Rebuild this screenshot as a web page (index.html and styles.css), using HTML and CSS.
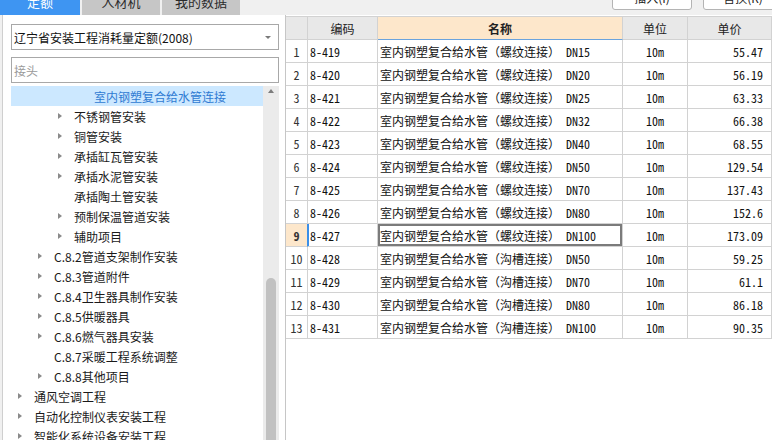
FILE: index.html
```html
<!DOCTYPE html>
<html lang="zh-CN">
<head>
<meta charset="utf-8">
<title>定额</title>
<link rel="stylesheet" href="styles.css">
</head>
<body>
<div class="app">
  <div class="topbar">
    <div class="tab active">定额</div>
    <div class="tab">人材机</div>
    <div class="tab">我的数据</div>
    <div class="spacer"></div>
    <div class="btn">插入(I)</div>
    <div class="btn last">替换(R)</div>
  </div>
  <div class="main">
    <div class="left">
      <div class="select">
        <span class="select-text">辽宁省安装工程消耗量定额(2008)</span>
        <span class="select-caret"></span>
      </div>
      <div class="search"><span class="placeholder">接头</span></div>
      <div class="tree">
        <div class="tree-rows">
          <div class="row lvl4 selected"><span class="tw"></span><span class="label">室内钢塑复合给水管连接</span></div>
          <div class="row lvl3"><span class="tw arrow"></span><span class="label">不锈钢管安装</span></div>
          <div class="row lvl3"><span class="tw arrow"></span><span class="label">铜管安装</span></div>
          <div class="row lvl3"><span class="tw arrow"></span><span class="label">承插缸瓦管安装</span></div>
          <div class="row lvl3"><span class="tw arrow"></span><span class="label">承插水泥管安装</span></div>
          <div class="row lvl3"><span class="tw"></span><span class="label">承插陶土管安装</span></div>
          <div class="row lvl3"><span class="tw arrow"></span><span class="label">预制保温管道安装</span></div>
          <div class="row lvl3"><span class="tw arrow"></span><span class="label">辅助项目</span></div>
          <div class="row lvl2"><span class="tw arrow"></span><span class="label">C.8.2管道支架制作安装</span></div>
          <div class="row lvl2"><span class="tw arrow"></span><span class="label">C.8.3管道附件</span></div>
          <div class="row lvl2"><span class="tw arrow"></span><span class="label">C.8.4卫生器具制作安装</span></div>
          <div class="row lvl2"><span class="tw arrow"></span><span class="label">C.8.5供暖器具</span></div>
          <div class="row lvl2"><span class="tw arrow"></span><span class="label">C.8.6燃气器具安装</span></div>
          <div class="row lvl2"><span class="tw"></span><span class="label">C.8.7采暖工程系统调整</span></div>
          <div class="row lvl2"><span class="tw arrow"></span><span class="label">C.8.8其他项目</span></div>
          <div class="row lvl1"><span class="tw arrow"></span><span class="label">通风空调工程</span></div>
          <div class="row lvl1"><span class="tw arrow"></span><span class="label">自动化控制仪表安装工程</span></div>
          <div class="row lvl1"><span class="tw arrow"></span><span class="label">智能化系统设备安装工程</span></div>
        </div>
        <div class="vscroll">
          <div class="vs-up"></div>
          <div class="vs-thumb"></div>
        </div>
      </div>
    </div>
    <div class="right">
      <table class="grid">
        <thead>
          <tr>
            <th class="c-no"></th>
            <th class="c-code">编码</th>
            <th class="c-name">名称</th>
            <th class="c-unit">单位</th>
            <th class="c-price">单价</th>
          </tr>
        </thead>
        <tbody>
          <tr><td class="no">1</td><td class="code">8-419</td><td class="name">室内钢塑复合给水管（螺纹连接） DN15</td><td class="unit">10m</td><td class="price">55.47</td></tr>
          <tr><td class="no">2</td><td class="code">8-420</td><td class="name">室内钢塑复合给水管（螺纹连接） DN20</td><td class="unit">10m</td><td class="price">56.19</td></tr>
          <tr><td class="no">3</td><td class="code">8-421</td><td class="name">室内钢塑复合给水管（螺纹连接） DN25</td><td class="unit">10m</td><td class="price">63.33</td></tr>
          <tr><td class="no">4</td><td class="code">8-422</td><td class="name">室内钢塑复合给水管（螺纹连接） DN32</td><td class="unit">10m</td><td class="price">66.38</td></tr>
          <tr><td class="no">5</td><td class="code">8-423</td><td class="name">室内钢塑复合给水管（螺纹连接） DN40</td><td class="unit">10m</td><td class="price">68.55</td></tr>
          <tr><td class="no">6</td><td class="code">8-424</td><td class="name">室内钢塑复合给水管（螺纹连接） DN50</td><td class="unit">10m</td><td class="price">129.54</td></tr>
          <tr><td class="no">7</td><td class="code">8-425</td><td class="name">室内钢塑复合给水管（螺纹连接） DN70</td><td class="unit">10m</td><td class="price">137.43</td></tr>
          <tr><td class="no">8</td><td class="code">8-426</td><td class="name">室内钢塑复合给水管（螺纹连接） DN80</td><td class="unit">10m</td><td class="price">152.6</td></tr>
          <tr class="current"><td class="no">9</td><td class="code">8-427</td><td class="name">室内钢塑复合给水管（螺纹连接） DN100</td><td class="unit">10m</td><td class="price">173.09</td></tr>
          <tr><td class="no">10</td><td class="code">8-428</td><td class="name">室内钢塑复合给水管（沟槽连接） DN50</td><td class="unit">10m</td><td class="price">59.25</td></tr>
          <tr><td class="no">11</td><td class="code">8-429</td><td class="name">室内钢塑复合给水管（沟槽连接） DN70</td><td class="unit">10m</td><td class="price">61.1</td></tr>
          <tr><td class="no">12</td><td class="code">8-430</td><td class="name">室内钢塑复合给水管（沟槽连接） DN80</td><td class="unit">10m</td><td class="price">86.18</td></tr>
          <tr><td class="no">13</td><td class="code">8-431</td><td class="name">室内钢塑复合给水管（沟槽连接） DN100</td><td class="unit">10m</td><td class="price">90.35</td></tr>
        </tbody>
      </table>
    </div>
  </div>
</div>
</body>
</html>
```
FILE: styles.css
```css
* { box-sizing: border-box; }
html, body { margin: 0; padding: 0; }
body {
  width: 772px;
  height: 440px;
  overflow: hidden;
  background: #f0f0f0;
  font-family: "Noto Sans CJK SC", "Noto Sans", sans-serif;
  font-size: 12px;
  color: #1e1e1e;
}
.app { display: flex; flex-direction: column; height: 440px; }

/* top bar */
.topbar { height: 15px; display: flex; overflow: hidden; flex: none; }
.tab {
  width: 78px; height: 27px; margin-top: -12px; margin-right: 2px;
  line-height: 27px; text-align: center;
  background: #c6c6c6; color: #2b2b2b; font-size: 13px;
}
.tab.active { width: 80px; background: #3e95f2; color: #fff; }
.spacer { flex: 1; }
.btn {
  width: 80px; height: 25px; margin-top: -15px; margin-left: 11px;
  border: 1px solid #b4b4b4; border-radius: 3px; background: #fff;
  line-height: 23px; text-align: center; font-size: 12px; color: #222;
}
.btn.last { margin-right: -11px; }

/* main */
.main { flex: 1; display: flex; min-height: 0; }
.left {
  margin-left: 2px; width: 283px; flex: none;
  background: #fff; border-left: 1px solid #cfcfcf;
  padding: 9px 6px 0 8px;
  display: flex; flex-direction: column;
}
.select {
  height: 26px; border: 1px solid #a8a8a8; background: #fff;
  display: flex; align-items: center; padding: 0 7px 0 2px;
}
.select-text { flex: 1; font-size: 12px; color: #111; }
.select-caret {
  width: 0; height: 0;
  border-left: 3px solid transparent; border-right: 3px solid transparent;
  border-top: 3px solid #7a7a7a;
}
.search {
  margin-top: 7px; height: 26px; border: 1px solid #a8a8a8; background: #fff;
  display: flex; align-items: center; padding-left: 2px;
}
.placeholder { color: #9a9a9a; font-size: 12px; }

.tree { margin-top: 3px; flex: 1; display: flex; min-height: 0; overflow: hidden; }
.tree-rows { flex: 1; }
.row { height: 20px; display: flex; align-items: center; white-space: nowrap; color: #1a1a1a; }
.row.lvl1 { padding-left: 7px; }
.row.lvl2 { padding-left: 27px; }
.row.lvl3 { padding-left: 47px; }
.row.lvl4 { padding-left: 67px; }
.row.selected { background: #cce8ff; color: #2f7bd3; }
.tw { width: 16px; flex: none; height: 20px; display: flex; align-items: center; }
.tw.arrow::before {
  content: ""; width: 0; height: 0;
  border-top: 3.5px solid transparent; border-bottom: 3.5px solid transparent;
  border-left: 4px solid #8a8a8a;
}
.vscroll {
  width: 16px; flex: none; background: #ebebeb;
  display: flex; flex-direction: column; align-items: center;
}
.vs-up {
  margin-top: 3px; width: 0; height: 0;
  border-left: 3.5px solid transparent; border-right: 3.5px solid transparent;
  border-bottom: 4px solid #7c7c7c;
}
.vs-thumb {
  margin-top: auto; width: 10px; height: 166px; margin-bottom: -4px;
  border-radius: 5px; background: #c1c1c1;
}

/* right grid */
.right {
  flex: 1; background: #fff; border-left: 1px solid #c6c6c6;
  padding-top: 1px; overflow: hidden;
}
.grid {
  border-collapse: separate; border-spacing: 0; table-layout: fixed;
  width: 486px;
}
.grid th, .grid td {
  border-right: 1px solid #d2d2d2; border-bottom: 1px solid #d2d2d2;
  padding: 0; white-space: nowrap; overflow: hidden;
}
.grid th {
  height: 24px; border-top: 1px solid #d2d2d2;
  background: #e8e8e8; font-weight: normal; font-size: 12px; color: #222;
  text-align: center;
}
.grid th.c-name { background: #fde7cb; font-weight: bold; border-bottom-color: #6aa3dd; }
.c-no { width: 22px; }
.c-code { width: 70px; }
.c-name { width: 245px; }
.c-unit { width: 65px; }
.c-price { width: 84px; }
.grid td {
  height: 23px; font-family: "Noto Sans Mono CJK SC", "Liberation Mono", monospace;
  font-size: 12px; color: #111;
}
.grid td.no { text-align: center; color: #333; background: #fff; }
.grid td.code { padding-left: 2px; }
.grid td.name { padding-left: 2px; }
.grid td.unit { text-align: center; }
.grid td.price { text-align: right; padding-right: 8px; }
.grid tr.current td.no { background: #fde7cb; font-weight: bold; border-right-color: #3b8fe8; }
.grid tr.current td.code { box-shadow: inset 1px 0 0 #3b8fe8; }
.grid tr.current td.name { box-shadow: inset 0 0 0 2px #7b7b7b; }
```
